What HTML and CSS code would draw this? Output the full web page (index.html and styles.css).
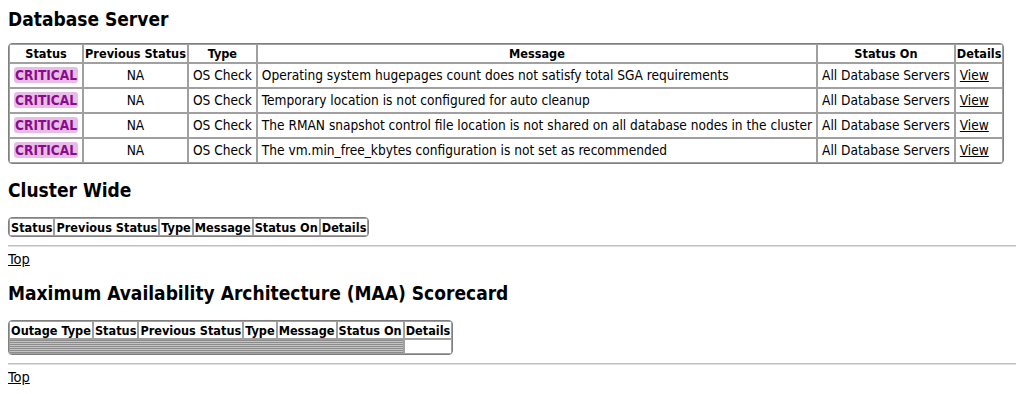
FILE: index.html
```html
<!DOCTYPE html>
<html>
<head>
<meta charset="utf-8">
<link rel="stylesheet" href="styles.css">
</head>
<body>
<h2 class="title first">Database Server</h2>
<table class="grid">
  <tr>
    <th>Status</th><th>Previous Status</th><th>Type</th><th>Message</th><th>Status On</th><th>Details</th>
  </tr>
  <tr>
    <td class="c"><span class="crit">CRITICAL</span></td><td class="c">NA</td><td class="c">OS Check</td>
    <td>Operating system hugepages count does not satisfy total SGA requirements</td>
    <td>All Database Servers</td><td><a href="#">View</a></td>
  </tr>
  <tr>
    <td class="c"><span class="crit">CRITICAL</span></td><td class="c">NA</td><td class="c">OS Check</td>
    <td>Temporary location is not configured for auto cleanup</td>
    <td>All Database Servers</td><td><a href="#">View</a></td>
  </tr>
  <tr>
    <td class="c"><span class="crit">CRITICAL</span></td><td class="c">NA</td><td class="c">OS Check</td>
    <td>The RMAN snapshot control file location is not shared on all database nodes in the cluster</td>
    <td>All Database Servers</td><td><a href="#">View</a></td>
  </tr>
  <tr>
    <td class="c"><span class="crit">CRITICAL</span></td><td class="c">NA</td><td class="c">OS Check</td>
    <td>The vm.min_free_kbytes configuration is not set as recommended</td>
    <td>All Database Servers</td><td><a href="#">View</a></td>
  </tr>
</table>

<h2 class="title">Cluster Wide</h2>
<table class="grid compact">
  <tr>
    <th>Status</th><th>Previous Status</th><th>Type</th><th>Message</th><th>Status On</th><th>Details</th>
  </tr>
</table>
<hr class="rule">
<a class="top" href="#">Top</a>

<h2 class="title">Maximum Availability Architecture (MAA) Scorecard</h2>
<table class="grid compact">
  <tr>
    <th>Outage Type</th><th>Status</th><th>Previous Status</th><th>Type</th><th>Message</th><th>Status On</th><th>Details</th>
  </tr>
  <tr>
    <td class="stripes" colspan="6"></td><td class="blank"></td>
  </tr>
</table>
<hr class="rule">
<a class="top" href="#">Top</a>
</body>
</html>
```
FILE: styles.css
```css
body {
  margin: 8px;
  font-family: "DejaVu Sans Condensed", "DejaVu Sans", sans-serif;
  font-size: 13.6px;
  color: #000;
  background: #fff;
}
.title {
  font-family: "DejaVu Sans Condensed", "DejaVu Sans", sans-serif;
  font-weight: bold;
  font-size: 19px;
  line-height: 22px;
  margin: 15px 0 16px;
}
.title.first {
  margin-top: 0;
  margin-bottom: 13px;
}
.grid {
  border-collapse: separate;
  border-spacing: 0;
  border: 1px solid #808080;
  border-radius: 4px;
}
.grid th, .grid td {
  border: 1px solid #a0a0a0;
  line-height: 15px;
}
.grid th {
  font-weight: bold;
  font-size: 12.6px;
  padding: 1px 1px;
  text-align: center;
}
.grid td {
  font-size: 13.6px;
  padding: 4px 4px;
  text-align: left;
}
.grid td.c { text-align: center; }
.crit {
  color: #8b0a8b;
  font-weight: bold;
  background: #e7bde7;
  border-radius: 3px;
  padding: 0 1px;
}
a { color: #000; }
.compact th { padding: 1px 1px 0; }
.stripes {
  height: 13px;
  padding: 0 !important;
  background: repeating-linear-gradient(to bottom, #8c8c8c 0 1px, #c4c4c4 1px 2px);
}
.blank { padding: 0 !important; }
.rule {
  border: 0;
  border-top: 1px solid #c0c0c0;
  border-bottom: 1px solid #e0e0e0;
  margin: 8px 0 4px;
}
.top {
  display: inline-block;
  font-size: 14.5px;
  line-height: 16px;
}
```
